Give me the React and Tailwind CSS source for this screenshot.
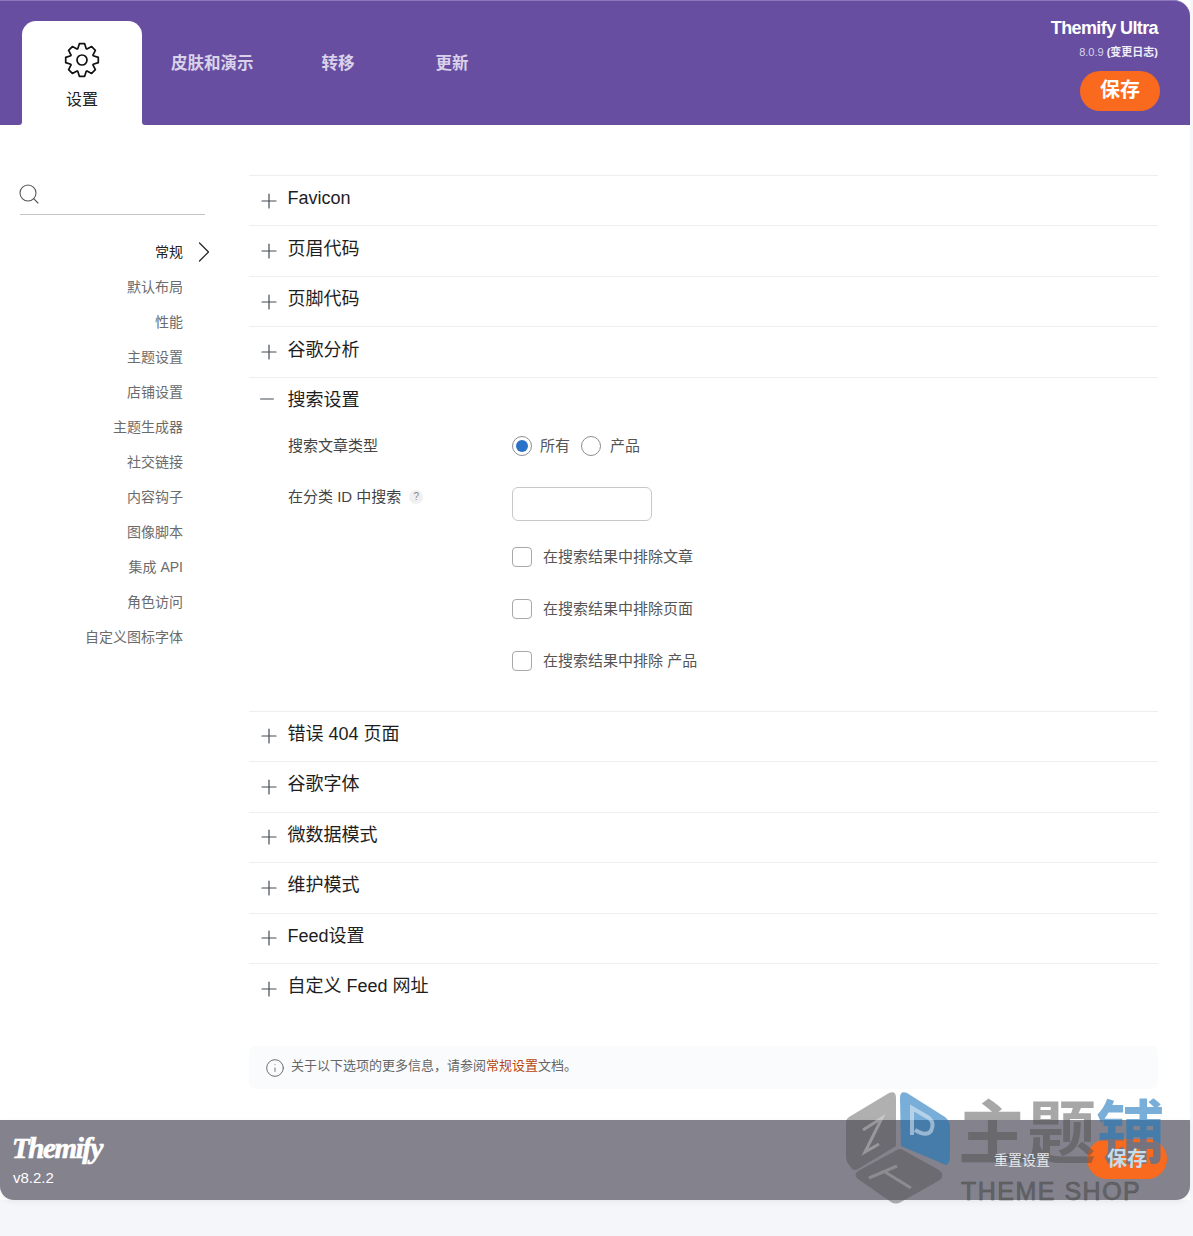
import { Search, ChevronRight, Plus, Minus, Info } from "lucide-react";

const CJK = "font-['Liberation_Sans','Noto_Sans_CJK_SC',sans-serif]";

const navItems = ["常规", "默认布局", "性能", "主题设置", "店铺设置", "主题生成器", "社交链接", "内容钩子", "图像脚本", "集成 API", "角色访问", "自定义图标字体"];
const rowsTop = ["Favicon", "页眉代码", "页脚代码", "谷歌分析"];
const rowsBottom = ["错误 404 页面", "谷歌字体", "微数据模式", "维护模式", "Feed设置", "自定义 Feed 网址"];
const excludes = ["在搜索结果中排除文章", "在搜索结果中排除页面", "在搜索结果中排除 产品"];

// 8 tooth outline, each tooth is 4 points
function gearPath() {
  const pts = [];
  for (let i = 0; i < 8; i++) {
    const a = (i * Math.PI) / 4 - Math.PI / 2;
    [[-0.36, 12], [-0.16, 16.5], [0.16, 16.5], [0.36, 12]].forEach(([da, r]) => {
      pts.push(`${(18 + r * Math.cos(a + da)).toFixed(2)} ${(18 + r * Math.sin(a + da)).toFixed(2)}`);
    });
  }
  return `M${pts.join(" L")} Z`;
}

function Row({ title }) {
  return (
    <div className="flex h-[50.45px] items-center border-t border-[#eeeeee] pl-[8px]">
      <Plus className="h-6 w-6 text-[#444a52]" strokeWidth={1.2} />
      <span className="ml-[6.5px] mt-[-5px] text-[18px] leading-none text-[#1e1e1e]">{title}</span>
    </div>
  );
}

function Radio({ checked }) {
  return (
    <span className="flex h-5 w-5 items-center justify-center rounded-full border border-[#8d8d8d] bg-white">
      {checked && <span className="h-3 w-3 rounded-full bg-[#2a72c8]" />}
    </span>
  );
}

export default function App() {
  return (
    <div className={`relative h-[1236px] w-[1193px] overflow-hidden bg-[#f5f6f9] ${CJK}`}>
      <div className="h-[1200px] w-[1190px] bg-white">
        <header className="flex h-[125px] items-start justify-between rounded-tr-[16px] border-t border-[#8b79bb] bg-[#684ea1] pl-[22px] pr-[32px]">
          <div className="flex">
            <div className="relative mt-5 flex h-[104px] w-[120px] flex-col items-center rounded-t-[14px] bg-white pt-[21px]">
              <svg width="36" height="36" viewBox="0 0 36 36" fill="none" stroke="#111111" strokeWidth="1.7" strokeLinejoin="round">
                <path d={gearPath()} />
                <circle cx="18" cy="18" r="5" />
              </svg>
              <span className="mt-[10px] text-[16px] leading-[24px] text-[#222222]">设置</span>
              <span className="absolute bottom-0 left-[-3px] h-[3px] w-[3px] bg-white">
                <span className="block h-full w-full rounded-br-[3px] bg-[#684ea1]" />
              </span>
              <span className="absolute bottom-0 right-[-3px] h-[3px] w-[3px] bg-white">
                <span className="block h-full w-full rounded-bl-[3px] bg-[#684ea1]" />
              </span>
            </div>
            <nav className="flex pt-[50px] text-[16.5px] font-bold leading-6 text-[#d9d2ea]">
              <span className="ml-[29px]">皮肤和演示</span>
              <span className="ml-[68px]">转移</span>
              <span className="ml-[81px]">更新</span>
            </nav>
          </div>
          <div className="flex flex-col items-end pt-[15px]">
            <div className="text-[18px] font-bold leading-6 tracking-[-0.6px] text-white">Themify Ultra</div>
            <div className="mt-[4px] text-[11px] leading-[16px] text-[#d8d2e8]">
              8.0.9 <span className="font-bold text-[#f1eef7]">(变更日志)</span>
            </div>
            <button className="mr-[-2px] mt-[11px] h-10 w-20 rounded-full bg-[#fa6a1e] pb-[3px] text-[20px] font-bold text-white">保存</button>
          </div>
        </header>

        <main className="flex h-[995px]">
          <aside className="w-[249px] shrink-0 pl-5 pt-[57px]">
            <div className="h-[33px] w-[185px] border-b border-[#c4c4c4]">
              <Search className="ml-[-3px] h-6 w-6 text-[#555555]" strokeWidth={1.1} />
            </div>
            <ul className="mt-5 w-[163px] text-right text-[14px] leading-[35px] text-[#6b6b6b]">
              {navItems.map((item, i) => (
                <li key={item} className={`relative whitespace-nowrap ${i === 0 ? "text-[#222222]" : ""}`}>
                  {item}
                  {i === 0 && <ChevronRight className="absolute right-[-39px] top-[-1px] h-9 w-9 text-[#222222]" strokeWidth={0.8} />}
                </li>
              ))}
            </ul>
          </aside>

          <section className="mr-[32px] flex-1 pt-[50px]">
            {rowsTop.map((title) => <Row key={title} title={title} />)}

            <div className="h-[334px] border-t border-[#eeeeee]">
              <div className="flex h-[43px] items-center pl-[6.5px]">
                <Minus className="h-[22px] w-[22px] text-[#444a52]" strokeWidth={1.1} />
                <span className="ml-[10px] mt-[2px] text-[18px] leading-none text-[#1e1e1e]">搜索设置</span>
              </div>
              <div className="flex pl-[39px] text-[15px] text-[#555555]">
                <div className="w-[224px] shrink-0">
                  <div className="mt-[13px] h-[51px] leading-[24px] text-[#444444]">搜索文章类型</div>
                  <div className="flex items-center gap-[8px] leading-[24px] text-[#444444]">
                    在分类 ID 中搜索
                    <span className="flex h-[14px] w-[14px] items-center justify-center rounded-full bg-[#f0f0f0] text-[10px] leading-none text-[#888888]">?</span>
                  </div>
                </div>
                <div>
                  <div className="mt-[15px] flex h-5 items-center">
                    <Radio checked />
                    <span className="ml-[8px]">所有</span>
                    <span className="ml-[11px]"><Radio /></span>
                    <span className="ml-[9px]">产品</span>
                  </div>
                  <input className="mt-[31px] block h-[34px] w-[140px] rounded-[6px] border border-[#c8c8c8] bg-white" />
                  <div className="mt-[26px] flex flex-col gap-[32px]">
                    {excludes.map((text) => (
                      <label key={text} className="flex h-5 items-center">
                        <span className="h-5 w-5 rounded-[4px] border border-[#a8a8a8] bg-white" />
                        <span className="ml-[11px] whitespace-nowrap">{text}</span>
                      </label>
                    ))}
                  </div>
                </div>
              </div>
            </div>

            {rowsBottom.map((title) => <Row key={title} title={title} />)}

            <div className="mt-[33px] flex h-[43px] items-center rounded-[6px] bg-[#fafbfc] pl-[16px] text-[13px] text-[#666666]">
              <Info className="mt-[1px] h-[20px] w-[20px] text-[#555555]" strokeWidth={1} />
              <span className="ml-[6px] mt-[-4px]">
                关于以下选项的更多信息，请参阅<span className="text-[#b5460f]">常规设置</span>文档。
              </span>
            </div>
          </section>
        </main>

        <footer className="flex h-[80px] items-center justify-between rounded-b-[14px] bg-[#83828d] pl-[13px] pr-[23px] shadow-[0_2px_6px_rgba(0,0,0,0.06)]">
          <div className="text-white">
            <div className="ml-[-1px] mt-[-2px] font-['Liberation_Serif',serif] text-[29px] font-bold italic leading-[36px] tracking-[-1.4px] [-webkit-text-stroke:0.7px_white]">Themify</div>
            <div className="mt-[2px] text-[15px] leading-[20px]">v8.2.2</div>
          </div>
          <div className="flex items-center">
            <span className="relative z-10 text-[14px] text-[#e8e8ea]">重置设置</span>
            <button className="ml-[37px] mt-[-2px] h-10 w-20 rounded-full bg-[#fa6a1e] text-[20px] font-bold">
              <span className="relative z-10 text-[#c4dde9]">保存</span>
            </button>
          </div>
        </footer>
      </div>

      {/* watermark over the footer */}
      <div className="pointer-events-none absolute left-[845px] top-[1090px] h-[118px] w-[325px]">
        <svg className="absolute left-0 top-0" width="110" height="116" viewBox="0 0 110 116">
          <path d="M4 27 L44 3 Q51 0 51 8 V56 L13 79 Q8 82 5 76 Q1 72 1 66 V33 Q1 29 4 27 Z" fill="#505050" fillOpacity="0.45" />
          <path d="M18 40 L37 28 L20 62 L34 54" stroke="#ffffff" strokeOpacity="0.3" strokeWidth="3" fill="none" />
          <path d="M55 8 Q55 0 62 3 L100 27 Q105 31 105 37 V66 Q105 73 101 75 L56 56 Z" fill="#1e78be" fillOpacity="0.6" />
          <path d="M67 45 V18 L84 28 Q90 33 86 41 Q81 47 70 40" stroke="#ffffff" strokeOpacity="0.45" strokeWidth="4" fill="none" />
          <path d="M52 60 L13 81 Q8 85 13 89 L46 112 Q51 115 56 112 L95 90 Q100 85 94 80 L58 60 Q55 58 52 60 Z" fill="#505050" fillOpacity="0.45" />
          <path d="M24 88 L52 76 M40 82 L66 98" stroke="#ffffff" strokeOpacity="0.22" strokeWidth="3" fill="none" />
        </svg>
        <div className="absolute left-[113px] top-[9px] whitespace-nowrap text-[69px] font-bold leading-[72px] text-[#505050]/50">
          主题<span className="text-[#1e78be]/60">铺</span>
        </div>
        <div className="absolute left-[116px] top-[86px] whitespace-nowrap text-[25px] leading-[30px] tracking-[1.5px] text-[#505050]/60 [-webkit-text-stroke:0.5px_#505050]">THEME SHOP</div>
      </div>
    </div>
  );
}
